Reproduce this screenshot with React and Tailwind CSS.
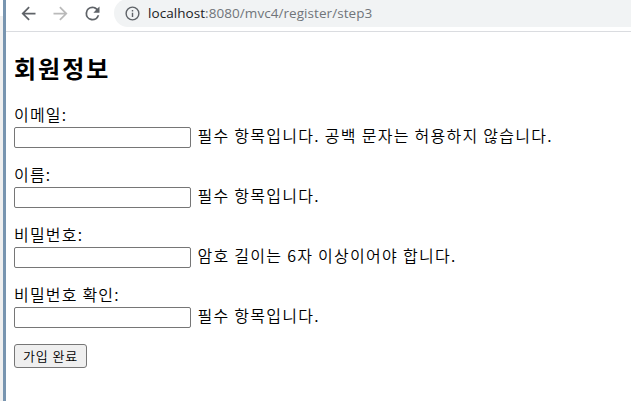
const fields = [
  { id: 'email', label: '이메일:', type: 'text', error: '필수 항목입니다. 공백 문자는 허용하지 않습니다.' },
  { id: 'name', label: '이름:', type: 'text', error: '필수 항목입니다.' },
  { id: 'password', label: '비밀번호:', type: 'password', error: '암호 길이는 6자 이상이어야 합니다.' },
  { id: 'confirm', label: '비밀번호 확인:', type: 'password', error: '필수 항목입니다.' },
];

function Icon({ d, className }) {
  return (
    <svg viewBox="0 0 24 24" className={`size-[21px] shrink-0 ${className}`} fill="currentColor" aria-hidden="true">
      <path d={d} />
    </svg>
  );
}

function Toolbar() {
  return (
    <header className="flex h-8 items-start overflow-hidden border-b border-[#dadce0] pl-[11.5px]">
      <div className="flex items-center pt-[2.5px]">
        <Icon className="text-[#5f6368]" d="M20 11H7.83l5.59-5.59L12 4l-8 8 8 8 1.41-1.41L7.83 13H20v-2z" />
        <Icon className="ml-[11px] text-[#bababa]" d="M12 4l-1.41 1.41L16.17 11H4v2h12.17l-5.58 5.59L12 20l8-8z" />
        <Icon
          className="ml-[11px] text-[#5f6368]"
          d="M17.65 6.35A7.96 7.96 0 0 0 12 4a8 8 0 1 0 7.73 10h-2.08A6 6 0 1 1 12 6c1.66 0 3.14.69 4.22 1.78L13 11h7V4l-2.35 2.35z"
        />
      </div>
      <div className="ml-[11.5px] -mt-px flex h-7 flex-1 items-center rounded-l-full bg-[#f1f3f4] pl-[10px]">
        <Icon
          className="size-[17px]! text-[#5f6368]"
          d="M11 7h2v2h-2zm0 4h2v6h-2zm1-9a10 10 0 1 0 0 20 10 10 0 0 0 0-20zm0 18a8 8 0 1 1 0-16 8 8 0 0 1 0 16z"
        />
        <span className="ml-[7px] whitespace-nowrap font-['Open_Sans','Noto_Sans',sans-serif] text-[13.5px] leading-5 tracking-[0.06px] text-[#70757a]">
          <span className="text-[#202124]">localhost</span>:8080/mvc4/register/step3
        </span>
      </div>
    </header>
  );
}

export default function App() {
  return (
    <div className="flex h-[401px] w-[631px] overflow-hidden bg-white font-['Noto_Sans_CJK_KR',sans-serif] text-black">
      <div className="w-[3px] shrink-0 bg-white pt-4">
        <div className="h-full bg-[#f0f0f0]" />
      </div>
      <div className="w-[3px] shrink-0 bg-[#7895b0]" />
      <div className="min-w-0 flex-1">
        <Toolbar />
        <main className="pl-2 pt-[20px]">
          <h2 className="text-2xl font-bold leading-8 tracking-[2px]">회원정보</h2>
          <form className="pt-[20px]">
            {fields.map((field) => (
              <div key={field.id} className="mb-[17px]">
                <label htmlFor={field.id} className="block h-[23px] text-base font-[350] leading-5 tracking-[1.2px]">
                  {field.label}
                </label>
                <div className="flex h-5 items-center">
                  <input
                    id={field.id}
                    type={field.type}
                    className="h-[21px] w-[177px] shrink-0 rounded-[2px] border border-[#767676] bg-white px-0.5"
                  />
                  <span className="ml-[6.5px] whitespace-nowrap pb-[5px] text-base font-[350] leading-5 tracking-[1.28px]">
                    {field.error}
                  </span>
                </div>
              </div>
            ))}
            <button
              type="button"
              className="flex h-6 w-[73px] items-center justify-center whitespace-nowrap rounded-[3px] border border-[#767676] bg-[#efefef] pb-px text-[13px] font-[350] leading-4 tracking-[0.9px]"
            >
              가입 완료
            </button>
          </form>
        </main>
      </div>
    </div>
  );
}
